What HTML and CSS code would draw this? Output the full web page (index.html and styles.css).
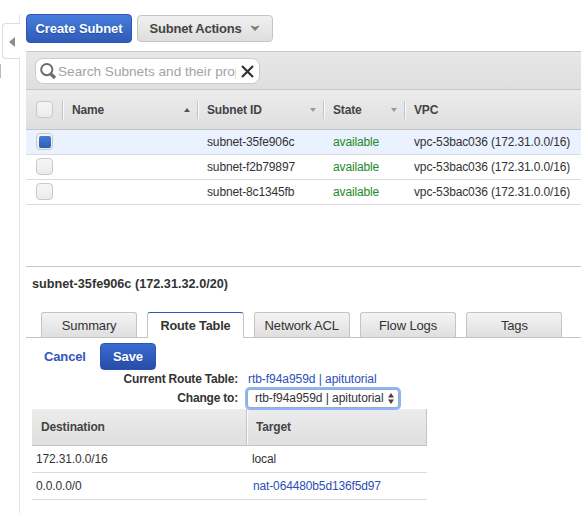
FILE: index.html
```html
<!DOCTYPE html>
<html lang="en">
<head>
<meta charset="utf-8">
<title>Subnets</title>
<link rel="stylesheet" href="styles.css">
</head>
<body>
<aside class="rail">
  <div class="handle"><svg width="6" height="10" viewBox="0 0 6 10"><path d="M6 0V10L0 5Z" fill="#8c8c8c"/></svg></div>
  <div class="scroll-edge"></div>
</aside>
<main>
  <div class="actions">
    <button class="btn primary"><span>Create Subnet</span></button>
    <button class="btn secondary"><span>Subnet Actions</span><svg width="10" height="7" viewBox="0 0 10 7"><path d="M1 1L5 5.6L9 1L5 2.6Z" fill="#777" stroke="#777" stroke-linejoin="round"/></svg></button>
  </div>
  <div class="filter">
    <div class="search">
      <svg class="glass" width="17" height="17" viewBox="0 0 17 17" fill="none" stroke="#6c6c6c"><circle cx="6.8" cy="6.6" r="5.6" stroke-width="2"/><path d="M10.5 10.6L15 15" stroke-width="3.4"/></svg>
      <span class="placeholder">Search Subnets and their prop</span>
      <svg class="clear" width="13" height="13" viewBox="0 0 13 13"><path d="M1 1L12 12M12 1L1 12" stroke="#333" stroke-width="2.2"/></svg>
    </div>
  </div>
  <div class="grid head">
    <div class="check"><i class="box"></i></div>
    <div class="th"><span>Name</span><svg width="6" height="4"><path d="M0 4H6L3 0Z" fill="#555"/></svg></div>
    <div class="th"><span>Subnet ID</span><svg width="6" height="4"><path d="M0 0H6L3 4Z" fill="#999"/></svg></div>
    <div class="th"><span>State</span><svg width="6" height="4"><path d="M0 0H6L3 4Z" fill="#999"/></svg></div>
    <div class="th"><span>VPC</span></div>
  </div>
  <div class="grid row selected"><div class="check"><i class="box on"></i></div><div></div><div>subnet-35fe906c</div><div class="ok">available</div><div>vpc-53bac036 (172.31.0.0/16)</div></div>
  <div class="grid row"><div class="check"><i class="box"></i></div><div></div><div>subnet-f2b79897</div><div class="ok">available</div><div>vpc-53bac036 (172.31.0.0/16)</div></div>
  <div class="grid row"><div class="check"><i class="box"></i></div><div></div><div>subnet-8c1345fb</div><div class="ok">available</div><div>vpc-53bac036 (172.31.0.0/16)</div></div>
  <section class="detail">
    <h2><span>subnet-35fe906c (172.31.32.0/20)</span></h2>
    <nav class="tabs">
      <a class="tab">Summary</a><a class="tab active">Route Table</a><a class="tab">Network ACL</a><a class="tab">Flow Logs</a><a class="tab">Tags</a>
    </nav>
    <div class="edit"><a class="cancel">Cancel</a><button class="btn primary save">Save</button></div>
    <dl class="fields">
      <dt>Current Route Table:</dt><dd class="link">rtb-f94a959d | apitutorial</dd>
      <dt>Change to:</dt><dd><div class="select"><span>rtb-f94a959d | apitutorial</span><svg width="6" height="11" viewBox="0 0 6 11"><path d="M0 4.5H6L3 0ZM0 6.5H6L3 11Z" fill="#444"/></svg></div></dd>
    </dl>
    <div class="routes">
      <div class="rhead"><div>Destination</div><div>Target</div></div>
      <div class="rrow"><div>172.31.0.0/16</div><div>local</div></div>
      <div class="rrow"><div>0.0.0.0/0</div><div class="link nat">nat-064480b5d136f5d97</div></div>
    </div>
  </section>
</main>
</body>
</html>
```

FILE: styles.css
```css
* { box-sizing: border-box; }
body {
  margin: 0;
  width: 581px;
  height: 513px;
  overflow: hidden;
  display: flex;
  background: #fff;
  color: #333;
  font: 12px/14px "Liberation Sans", Arial, sans-serif;
  letter-spacing: -0.14px;
  white-space: nowrap;
}
svg { display: block; flex: none; }
.rail {
  position: relative;
  flex: none;
  width: 20px;
  height: 499px;
  margin-top: 14px;
  border-right: 1px solid #e4e4e4;
}
.handle {
  width: 18px;
  height: 36px;
  margin: 9px 0 0 2px;
  padding: 13px 0 0 6px;
  background: #fff;
  border: 1px solid #ddd;
  border-right: 0;
  border-radius: 4px 0 0 4px;
}
.scroll-edge { width: 1px; height: 14px; margin-top: 5px; background: #bbb; }
main { flex: none; width: 555px; margin-left: 6px; padding-top: 14px; }

.actions { display: flex; height: 37px; gap: 5px; }
.btn {
  display: flex;
  align-items: center;
  justify-content: center;
  padding: 0;
  font: bold 13px/15px "Liberation Sans", Arial, sans-serif;
  letter-spacing: -0.1px;
}
.primary {
  width: 106px;
  height: 29px;
  padding-bottom: 1px;
  color: #fff;
  text-shadow: 0 1px 1px #234b9b;
  background: linear-gradient(#477ddd, #2f5bb7);
  border: 1px solid #2c56b0;
  border-radius: 4px;
}
.secondary {
  width: 136px;
  height: 27px;
  margin-top: 1px;
  padding: 0 1px 1px 0;
  gap: 8px;
  letter-spacing: -0.2px;
  color: #444;
  background: linear-gradient(#f0f0f0, #dedede);
  border: 1px solid #c4c4c4;
  border-radius: 4px;
}

.filter {
  height: 39px;
  padding: 6px 0 0 9px;
  background: linear-gradient(#e7e7e7, #dfdfdf);
  border-top: 1px solid #c6c6c6;
  border-bottom: 1px solid #c6c6c6;
}
.search {
  display: flex;
  align-items: center;
  width: 225px;
  height: 26px;
  padding-left: 4px;
  background: #fff;
  border: 1px solid #ccc;
  border-radius: 8px;
}
.placeholder {
  width: 178px;
  margin-left: 1px;
  overflow: hidden;
  color: #a4a4a4;
  font-size: 13.6px;
  line-height: 17px;
  letter-spacing: 0;
}
.clear { margin-left: 5px; }

.grid { display: grid; grid-template-columns: 36px 135px 126px 81px 177px; }
.head {
  height: 40px;
  align-items: center;
  font-weight: bold;
  color: #444;
  background: linear-gradient(#ececec, #dfdfdf);
  border-bottom: 1px solid #c4c4c4;
}
.th {
  display: flex;
  align-items: center;
  justify-content: space-between;
  height: 18px;
  padding: 0 7px 0 9px;
  border-left: 1px solid #c4c4c4;
  box-shadow: inset 1px 0 #fafafa;
}
.check { padding-left: 10px; }
.box {
  display: block;
  width: 17px;
  height: 17px;
  background: linear-gradient(#f6f6f6, #ebebeb);
  border: 1px solid #c9c9c9;
  border-radius: 4px;
}
.box.on { padding: 2px 1px; }
.box.on::before {
  content: "";
  display: block;
  width: 12px;
  height: 12px;
  margin: 0 auto;
  border-radius: 2px;
  background: linear-gradient(#447bdc, #2f5bb7);
}
.row { height: 25px; line-height: 24px; border-bottom: 1px solid #dcdcdc; }
.row > div:nth-child(n+3) { padding-left: 10px; }
.row .check { padding-top: 3px; }
.selected { background: #eaf1ff; }
.row .ok { color: #1d8b25; }

.detail { margin-top: 61px; border-top: 1px solid #c6c6c6; }
h2 { margin: 0; height: 45px; padding: 9px 0 0 6px; font-size: 12.7px; line-height: 16px; letter-spacing: 0; }
.tabs {
  display: flex;
  height: 26px;
  padding-left: 15px;
  gap: 10px;
  border-bottom: 1px solid #c4c4c4;
}
.tab {
  width: 96.3px;
  height: 25px;
  border: 1px solid #c4c4c4;
  border-bottom: 0;
  border-radius: 3px 3px 0 0;
  background: linear-gradient(#f4f4f4, #dfdfdf);
  text-align: center;
  font-size: 13px;
  line-height: 26px;
}
.tab.active { height: 26px; background: #fff; border-top-color: #2f5bb7; font-weight: bold; font-size: 12.7px; }
.edit { display: flex; padding: 5px 0 0 18px; }
.cancel { width: 56px; color: #3355bb; font-weight: bold; font-size: 13px; line-height: 27px; }
.save { width: 56px; height: 27px; background: linear-gradient(#3a6cd2, #284ca8); }
.fields {
  display: grid;
  grid-template-columns: 212px auto;
  grid-template-rows: 18px 21px;
  column-gap: 9px;
  margin: 0;
}
.fields dt { text-align: right; font-weight: bold; line-height: 19px; letter-spacing: -0.2px; }
.fields dt + dd + dt { line-height: 21px; }
.fields dd { margin: 0; line-height: 19px; letter-spacing: -0.05px; }
.fields dd.link { padding-left: 1px; }
.link { color: #2d4fb5; }
.select {
  display: flex;
  align-items: center;
  justify-content: space-between;
  width: 152px;
  height: 19px;
  margin-top: 1px;
  padding: 0 4px 0 7px;
  background: #fff;
  border: 1px solid #9dabc0;
  border-radius: 3px;
  box-shadow: 0 0 0 2px #8bb7fa;
  position: relative;
}
.routes { width: 395px; margin-left: 6px; }
.rhead, .rrow { display: grid; grid-template-columns: 214px 181px; }
.rhead {
  height: 37px;
  font-weight: bold;
  line-height: 36px;
  color: #444;
  background: linear-gradient(#ececec, #dfdfdf);
  border-bottom: 1px solid #c4c4c4;
  border-right: 1px solid #c4c4c4;
}
.rhead div { padding-left: 9px; }
.rhead div + div { border-left: 1px solid #c4c4c4; box-shadow: inset 1px 0 #fafafa; }
.rrow { height: 27px; line-height: 26px; border-bottom: 1px solid #dcdcdc; }
.rrow div { padding-left: 4px; }
.rrow div + div { padding-left: 6px; }
.rrow div.nat { padding-left: 7px; }
```
